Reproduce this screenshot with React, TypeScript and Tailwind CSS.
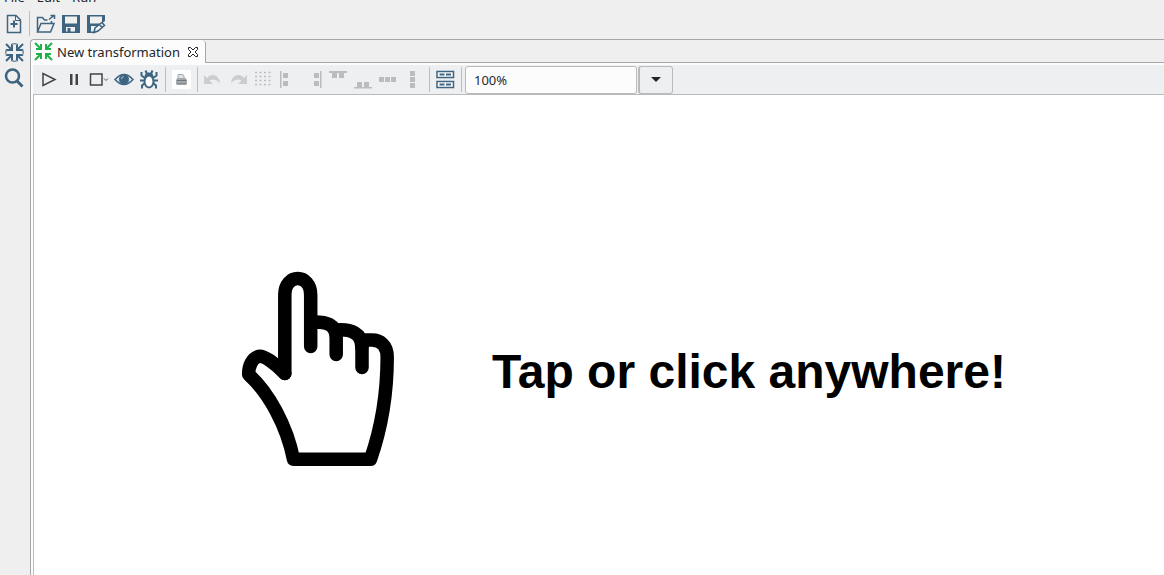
import type { ReactNode } from 'react';

type ToolProps = { label: string; children: ReactNode; disabled?: boolean };

function Tool({ label, children, disabled }: ToolProps) {
  return (
    <button
      type="button"
      aria-label={label}
      disabled={disabled}
      className="flex h-[25px] w-[25px] shrink-0 items-center justify-center"
    >
      <svg viewBox="0 0 25 25" className="size-[25px]" fill="none">
        {children}
      </svg>
    </button>
  );
}

function Divider() {
  return <span className="mx-[3px] h-[25px] w-px shrink-0 bg-[#bcbdbe]" />;
}

const arrowsIn = (
  <>
    <path d="M4 4l6 6M21 4l-6 6M4 21l6-6M21 21l-6-6" strokeWidth="2" />
    <path d="M5 10h5V5M20 10h-5V5M5 15h5v5M20 15h-5v5" strokeWidth="2" />
  </>
);

const blue = '#3d6480';
const grey = '#bcbcbc';

function MainToolbar() {
  return (
    <div className="flex h-[22px] items-center pl-px">
      <Tool label="New file">
        <path d="M6.500 4.500h8.500l4.500 4.500v12.500h-13z" stroke={blue} strokeWidth="1.500" />
        <path d="M14.500 4.500v5h5" stroke={blue} strokeWidth="1" />
        <path d="M13 9.500v7M9.500 13h7" stroke={blue} strokeWidth="2" />
      </Tool>
      <Divider />
      <Tool label="Open file">
        <path d="M4.500 21V6.500h5l2 2.500h3M4.500 21l3.500-8.500h13L17.500 21zM18.500 12v-2" stroke={blue} strokeWidth="1.500" />
        <path d="M16 8.500L21 4.500M17.500 4.500h4V8" stroke={blue} strokeWidth="1.500" />
      </Tool>
      <Tool label="Save">
        <path d="M4 4h18v18H4zM7 5.500v7h12v-7zM8 16v4.500h9V16z" fill={blue} fillRule="evenodd" />
        <path d="M9.500 17h3v4h-3z" fill={blue} />
      </Tool>
      <Tool label="Save as">
        <path d="M4 4h18v6l-7 5H8v5.500h3V22H4zM7 5.500v7h12v-7z" fill={blue} fillRule="evenodd" />
        <path d="M11 21.500l1-4.500 7-5.500 2.500 3-6.500 5.500zM16.500 13.500l2.500 3" fill="#efefef" stroke={blue} strokeWidth="1.500" />
      </Tool>
    </div>
  );
}

function CanvasToolbar() {
  return (
    <div className="flex h-[30px] items-center border-b border-[#b9babb] bg-[#edeff1] pl-1">
      <Tool label="Run">
        <path d="M6 6.500v12L18 12.500z" stroke="#444" strokeWidth="1.500" />
      </Tool>
      <Tool label="Pause">
        <path d="M8 7h2.500v11H8zM13.500 7H16v11h-2.500z" fill="#444" />
      </Tool>
      <Tool label="Stop">
        <path d="M3.500 7h11.500v11H3.500z" stroke="#444" strokeWidth="1.500" />
        <path d="M17 11.500l2 2 2-2" stroke="#555" />
      </Tool>
      <Tool label="Preview">
        <path d="M3 12.500Q12 2.500 21 12.500Q12 22.500 3 12.500z" fill="#dfe8ed" stroke={blue} strokeWidth="1.500" />
        <circle cx="12" cy="12.500" r="5" fill={blue} />
        <path d="M9.500 12a2.500 2.500 0 0 1 2-2.500" stroke="#b8cbd6" />
      </Tool>
      <Tool label="Debug">
        <path d="M8.500 3.500L10 7M15.500 3.500L14 7M4.500 5v3.500L8 11M19.500 5v3.500L16 11M3 13.500h5M21 13.500h-5M5 21.500v-3L8 16M19 21.500v-3L16 16" stroke={blue} strokeWidth="2" />
        <ellipse cx="12" cy="14.500" rx="4.500" ry="6" fill="white" stroke={blue} strokeWidth="2" />
        <path d="M7.500 10.500Q7.500 5.500 12 5.500T16.500 10.500Q12 7.500 7.500 10.500z" fill={blue} />
      </Tool>
      <Divider />
      <Tool label="Print">
        <path d="M3 3h19v19H3z" fill="white" />
        <path d="M9 7.500h5l1 1.500v3H9z" fill="#dce1e5" stroke="#a5adb2" />
        <path d="M8.500 11h8l1.500 2v4.500H7V13z" fill="#a2a8ac" />
        <path d="M8 13.500h9M8 17h9" stroke="#6f777c" />
      </Tool>
      <Divider />
      <Tool label="Undo" disabled>
        <path d="M3 8v9h9l-3.500-3.500q5.500-3 10.500 2.500Q18 8.500 12 8q-4 0-6 3z" fill="#cdcdcd" />
      </Tool>
      <Tool label="Redo" disabled>
        <path d="M21 8v9h-9l3.500-3.500q-5.500-3-10.500 2.500Q6 8.500 12 8q4 0 6 3z" fill="#cdcdcd" />
      </Tool>
      <Tool label="Snap to grid" disabled>
        <path d="M4 5.500h16M4 9.500h16M4 13.500h16M4 17.500h16" stroke={grey} strokeWidth="1.500" strokeDasharray="2 2.500" />
      </Tool>
      <Tool label="Align left" disabled>
        <path d="M4 4h1.500v17H4zM7 6h5v5H7zM7 14h5v5H7z" fill={grey} />
      </Tool>
      <Tool label="Align right" disabled>
        <path d="M19 4h1.500v17H19zM13 6h5v5h-5zM13 14h5v5h-5z" fill={grey} />
      </Tool>
      <Tool label="Align top" disabled>
        <path d="M3 4h18v2H3zM6 6h5v5H6zM13 6h5v5h-5z" fill={grey} />
      </Tool>
      <Tool label="Align bottom" disabled>
        <path d="M3 20h18v1.500H3zM6 15h5v5H6zM13 15h5v5h-5z" fill={grey} />
      </Tool>
      <Tool label="Distribute horizontally" disabled>
        <path d="M3 10h5v5H3zM9 10h5v5H9zM15 10h5v5h-5z" fill={grey} />
      </Tool>
      <Tool label="Distribute vertically" disabled>
        <path d="M9 4h5v5H9zM9 10h5v5H9zM9 16h5v5H9z" fill={grey} />
      </Tool>
      <Divider />
      <Tool label="Show results">
        <path d="M4 4.500h16.500v6H4zM4 14.500h16.500v6H4z" fill="white" stroke={blue} strokeWidth="1.500" />
        <path d="M6.500 7.500h5M13 7.500h5M6.500 17.500h5M13 17.500h5" stroke={blue} strokeWidth="2" />
      </Tool>
      <Divider />
      <input
        aria-label="Zoom level"
        defaultValue="100%"
        className="h-7 w-[172px] rounded-[3px] border border-[#b9babb] bg-[#fcfcfc] px-2 pt-px text-[13px] text-[#26292c] outline-none"
      />
      <button
        type="button"
        aria-label="Choose zoom level"
        className="ml-px flex h-7 w-[35px] items-center justify-center rounded-[3px] border border-l-2 border-[#b9babb] bg-[#edeff1]"
      >
        <svg viewBox="0 0 10 5" className="h-[5px] w-2.5">
          <path d="M0 0h10L5 5z" fill="#232629" />
        </svg>
      </button>
    </div>
  );
}

function Hand() {
  return (
    <svg
      viewBox="240 270 156 198"
      className="h-[198px] w-[156px] shrink-0"
      fill="none"
      stroke="black"
      strokeWidth="13.500"
      strokeLinecap="round"
      strokeLinejoin="round"
      role="img"
      aria-label="Pointing hand"
    >
      <path d="M284.800 373.500V295C284.800 273 310.700 273 310.700 295V346.500" />
      <path d="M284.800 373.500C275 363 264 355.500 259 356.300C252 358 248.500 366 248.700 374.500C269 393 287 426 293.500 459.300H370.500C380 432 387.200 397 387.200 357C387.200 345 380 340 372 340H362V367.500" />
      <path d="M312 322C326 321.500 336.200 324 336.200 338V354.500" />
      <path d="M337 330C351 329 361.800 333 361.800 347" />
    </svg>
  );
}

export default function App() {
  return (
    <div className="flex min-h-screen flex-col bg-[#efefef] font-['Noto_Sans',sans-serif] text-[13px] text-[#232629]">
      <nav aria-label="Menu" className="flex h-3 items-end gap-3 overflow-hidden pb-1.5 pl-1 leading-[18px]">
        <button type="button">File</button>
        <button type="button">Edit</button>
        <button type="button">Run</button>
      </nav>
      <MainToolbar />
      <div className="flex grow pt-[5px]">
        <aside className="flex w-[30px] shrink-0 flex-col items-center pt-px pr-0.5">
          <Tool label="Transformations">
            <path d="M9 4.500Q12.500 3 16 4.500M9 20.500Q12.500 22 16 20.500M4.500 9Q3 12.500 4.500 16M20.500 9Q22 12.500 20.500 16" stroke={blue} strokeWidth="1.200" />
            <g stroke={blue}>{arrowsIn}</g>
          </Tool>
          <Tool label="Search">
            <circle cx="10.500" cy="11" r="6.500" stroke={blue} strokeWidth="2.500" />
            <path d="M15 16l5.500 5.500" stroke={blue} strokeWidth="3" />
          </Tool>
        </aside>
        <main className="flex min-w-0 grow flex-col rounded-tl border-t border-l border-[#a5a7a9] bg-[#fcfcfc]">
          <div className="flex h-[23px]">
            <div className="flex shrink-0 items-center rounded-tr border-r border-[#a5a7a9] pr-1.5">
              <button type="button" className="flex items-center">
                <svg viewBox="0 0 25 25" className="mr-px size-[25px]" fill="none" stroke="#1fb04c">
                  {arrowsIn}
                </svg>
                <span className="pt-[3px]">New transformation</span>
              </button>
              <button type="button" aria-label="Close tab" className="ml-[7px]">
                <svg viewBox="0 0 12 12" className="size-3" fill="white" stroke="#222">
                  <path d="M1.500 1.500h2L6 4l2.500-2.500h2v2L8 6l2.500 2.500v2h-2L6 8l-2.500 2.500h-2v-2L4 6 1.500 3.500z" />
                </svg>
              </button>
            </div>
            <div className="grow border-b border-[#a5a7a9] bg-[#efefef]" />
          </div>
          <div className="flex grow flex-col pt-0.5 pl-0.5">
            <CanvasToolbar />
            <section className="flex grow items-center border-l border-[#b9babb] bg-white pt-[68px] pl-[206px]">
              <button type="button" className="flex items-center text-left">
                <Hand />
                <span className="ml-24 pt-1.5 font-['Liberation_Sans',sans-serif] text-5xl leading-none font-bold text-black">
                  Tap or click anywhere!
                </span>
              </button>
            </section>
          </div>
        </main>
      </div>
    </div>
  );
}
